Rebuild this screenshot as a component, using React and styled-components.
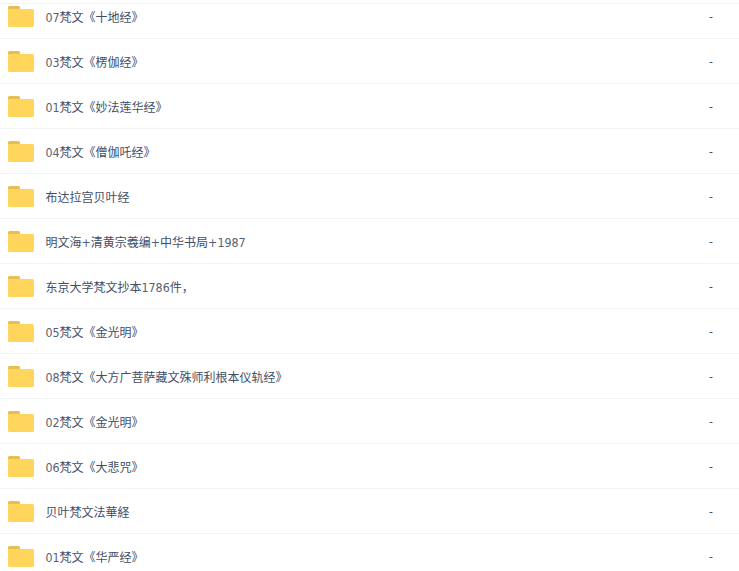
import React from 'react'
import styled, { createGlobalStyle } from 'styled-components'

const FILES = [
    { id: 1, name: "07梵文《十地经》" },
    { id: 2, name: "03梵文《楞伽经》" },
    { id: 3, name: "01梵文《妙法莲华经》" },
    { id: 4, name: "04梵文《僧伽吒经》" },
    { id: 5, name: "布达拉宫贝叶经" },
    { id: 6, name: "明文海+清黄宗羲编+中华书局+1987" },
    { id: 7, name: "东京大学梵文抄本1786件，" },
    { id: 8, name: "05梵文《金光明》" },
    { id: 9, name: "08梵文《大方广菩萨藏文殊师利根本仪轨经》" },
    { id: 10, name: "02梵文《金光明》" },
    { id: 11, name: "06梵文《大悲咒》" },
    { id: 12, name: "贝叶梵文法華経" },
    { id: 13, name: "01梵文《华严经》" },
]

const GlobalStyle = createGlobalStyle`
    * {
        box-sizing: border-box;
    }
    body {
        margin: 0;
        background: #fff;
        overflow: hidden;
    }
`

const Page = styled.div`
    display: flex;
    flex-direction: column;
    height: 571px;
    overflow: hidden;
    font-family: "DejaVu Sans Condensed", "DejaVu Sans", "Noto Sans CJK SC", sans-serif;
    font-stretch: condensed;
    font-size: 12px;
    color: #424e67;
`

const HeadEdge = styled.div`
    flex: none;
    height: 4px;
    border-bottom: 1px solid #f2f4f7;
`

/* the list is scrolled a little under the head */
const List = styled.ul`
    flex: 1;
    min-height: 0;
    display: flex;
    flex-direction: column;
    justify-content: flex-start;
    margin: 0;
    padding: 0;
    list-style: none;
    overflow: hidden;
`

const Row = styled.li`
    flex: none;
    display: flex;
    align-items: flex-end;
    height: ${({ $cut }) => ($cut ? 35 : 45)}px;
    padding: 0 26px 11px 8px;
    border-bottom: 1px solid #f2f4f7;
`

const Icon = styled.svg`
    flex: none;
    display: block;
    width: 26px;
    height: 21px;
`

const Name = styled.span`
    flex: 1;
    margin: 0 0 -1px 11.5px;
    line-height: 20px;
    white-space: nowrap;
`

/* digits and plus signs are a little wider and lighter than the hanzi */
const Latin = styled.span`
    font-size: 12.3px;
    line-height: 1;
    color: #566072;
`

const Size = styled.span`
    line-height: 20px;
    color: #4c4f58;
`

const Folder = () => (
    <Icon viewBox="0 0 26 21">
        <path d="M0 1.5A1.5 1.5 0 0 1 1.5 0h9A1.5 1.5 0 0 1 12 1.5V5H0z" fill="#e6bf50" />
        <path d="M0 3h24.5A1.5 1.5 0 0 1 26 4.5v15a1.5 1.5 0 0 1-1.5 1.5h-23A1.5 1.5 0 0 1 0 19.5z" fill="#ffd55c" />
    </Icon>
)

const App = () => {
    return (
        <Page lang="zh-CN">
            <GlobalStyle />
            <HeadEdge />
            <List>
                {FILES.map((file, idx) => {
                    return (
                        <Row key={file.id} $cut={idx === 0}>
                            <Folder />
                            <Name>
                                {file.name.split(/([0-9+]+)/).map((part, i) => (
                                    i % 2 ? <Latin key={i}>{part}</Latin> : part
                                ))}
                            </Name>
                            <Size>-</Size>
                        </Row>
                    )
                })}
            </List>
        </Page>
    )
}

export default App
